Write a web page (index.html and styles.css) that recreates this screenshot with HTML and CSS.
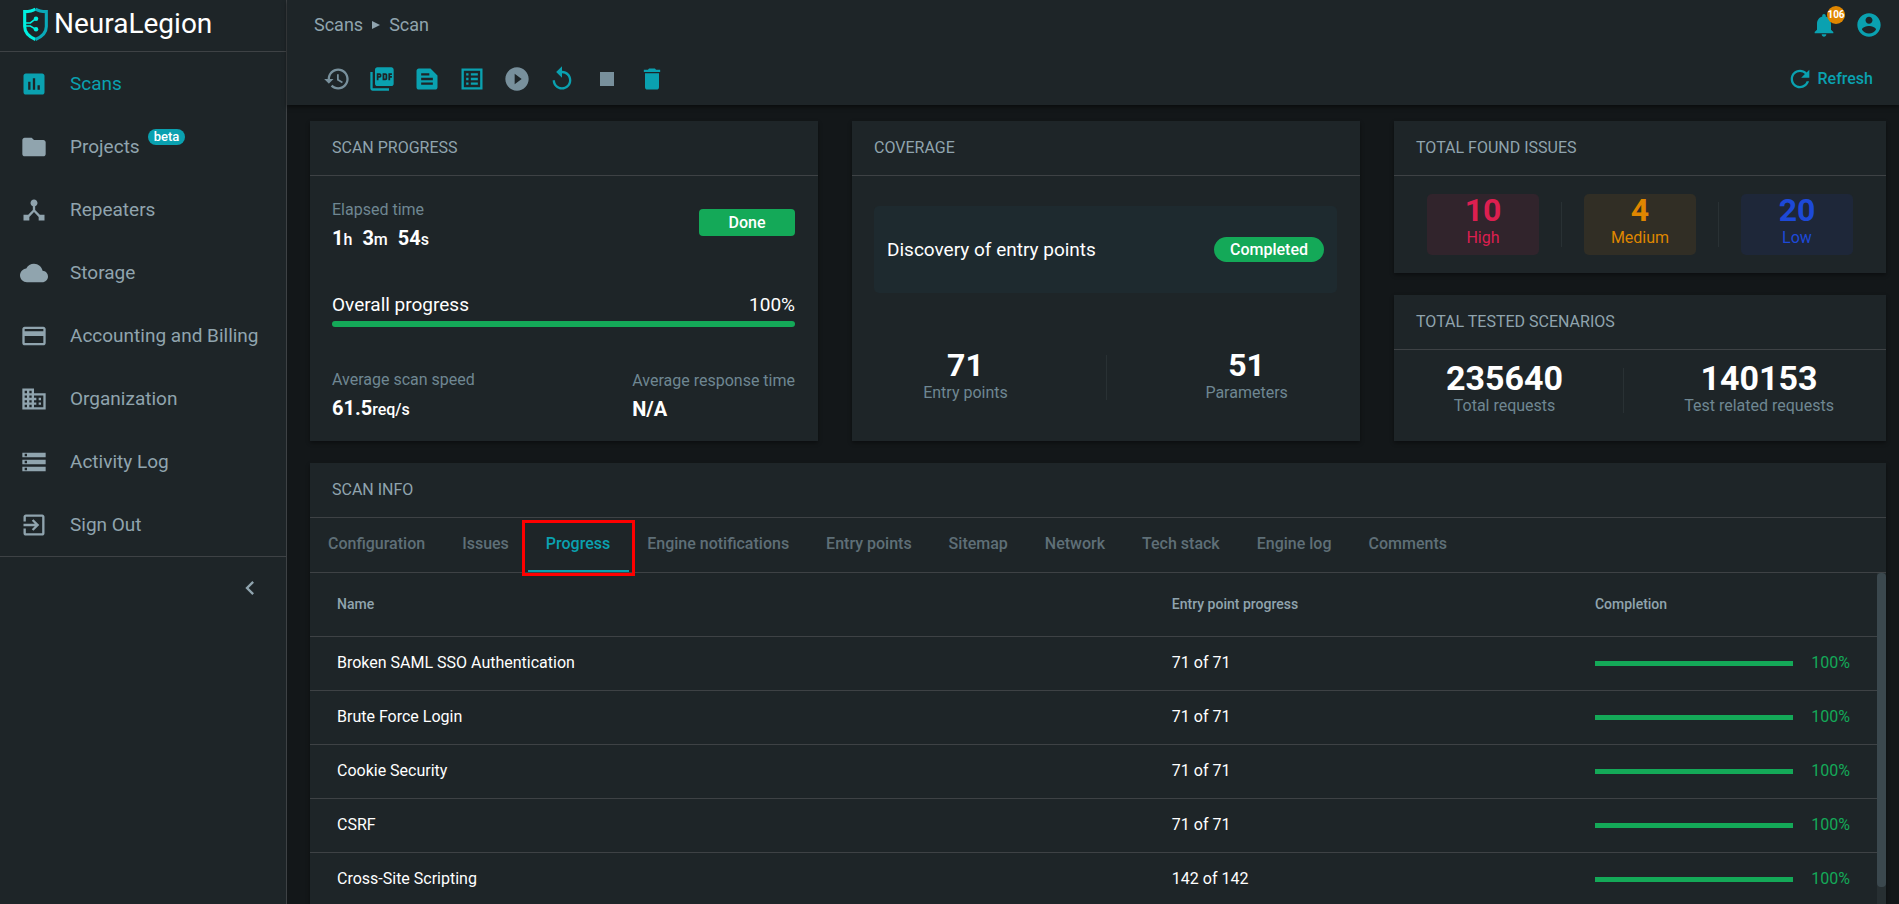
FILE: index.html
```html
<!DOCTYPE html>
<html lang="en">
<head>
    <meta charset="UTF-8">
    <meta name="viewport" content="width=device-width, initial-scale=1.0">
    <title>NeuraLegion - Scan</title>
    <link rel="stylesheet" href="styles.css">
</head>
<body>
    <aside class="sidebar">
        <a class="logo" href="#">
            <svg class="logo-mark" viewBox="0 0 24 33">
                <path d="M12 2 C9 4 5.500 4.500 1.500 4.500 V19 C1.500 25.500 7 29.500 12 31.500" fill="none" stroke="#00f0e0" stroke-width="3"/>
                <path d="M12 2 C15 4 18.500 4.500 22.500 4.500 V19 C22.500 25.500 17 29.500 12 31.500" fill="none" stroke="#0aa9b8" stroke-width="3"/>
                <path d="M2 15.500 H7 L12 11.500 M2 18.500 H7 L12 21.500" fill="none" stroke="#00f0e0" stroke-width="1.500"/>
                <circle cx="12.500" cy="11.500" r="2.200" fill="#00f0e0"/>
                <circle cx="12.500" cy="21.500" r="2.200" fill="#00f0e0"/>
            </svg>
            <span>NeuraLegion</span>
        </a>
        <nav class="menu">
            <a class="menu-item active" href="#">
                <svg class="menu-icon" viewBox="0 0 24 24"><path d="M19 3H5c-1.100 0-2 .9-2 2v14c0 1.100.9 2 2 2h14c1.100 0 2-.9 2-2V5c0-1.100-.9-2-2-2zM9 17H7v-7h2v7zm4 0h-2V7h2v10zm4 0h-2v-4h2v4z"/></svg>
                <span>Scans</span>
            </a>
            <a class="menu-item" href="#">
                <svg class="menu-icon" viewBox="0 0 24 24"><path d="M10 4H4c-1.100 0-1.990.9-1.990 2L2 18c0 1.100.9 2 2 2h16c1.100 0 2-.9 2-2V8c0-1.100-.9-2-2-2h-8l-2-2z"/></svg>
                <span>Projects</span>
                <span class="beta">beta</span>
            </a>
            <a class="menu-item" href="#">
                <svg class="menu-icon" viewBox="0 0 24 24"><path d="M17 16l-4-4V8.820C14.160 8.400 15 7.300 15 6c0-1.660-1.340-3-3-3S9 4.340 9 6c0 1.300.84 2.400 2 2.820V12l-4 4H3v5h5v-3.050l4-4.200 4 4.200V21h5v-5h-4z"/></svg>
                <span>Repeaters</span>
            </a>
            <a class="menu-item" href="#">
                <svg class="menu-icon" viewBox="0 0 24 24"><path d="M19.350 10.040C18.670 6.590 15.640 4 12 4 9.110 4 6.600 5.640 5.350 8.040 2.340 8.360 0 10.910 0 14c0 3.310 2.690 6 6 6h13c2.760 0 5-2.240 5-5 0-2.640-2.050-4.780-4.650-4.960z"/></svg>
                <span>Storage</span>
            </a>
            <a class="menu-item" href="#">
                <svg class="menu-icon" viewBox="0 0 24 24"><path d="M20 4H4c-1.110 0-1.990.89-1.990 2L2 18c0 1.110.89 2 2 2h16c1.110 0 2-.89 2-2V6c0-1.110-.89-2-2-2zm0 14H4v-6h16v6zm0-10H4V6h16v2z"/></svg>
                <span>Accounting and Billing</span>
            </a>
            <a class="menu-item" href="#">
                <svg class="menu-icon" viewBox="0 0 24 24"><path d="M12 7V3H2v18h20V7H12zM6 19H4v-2h2v2zm0-4H4v-2h2v2zm0-4H4V9h2v2zm0-4H4V5h2v2zm4 12H8v-2h2v2zm0-4H8v-2h2v2zm0-4H8V9h2v2zm0-4H8V5h2v2zm10 12h-8v-2h2v-2h-2v-2h2v-2h-2V9h8v10zm-2-8h-2v2h2v-2zm0 4h-2v2h2v-2z"/></svg>
                <span>Organization</span>
            </a>
            <a class="menu-item" href="#">
                <svg class="menu-icon" viewBox="0 0 24 24"><path d="M2 20h20v-4H2v4zm2-3h2v2H4v-2zM2 4v4h20V4H2zm4 3H4V5h2v2zm-4 7h20v-4H2v4zm2-3h2v2H4v-2z"/></svg>
                <span>Activity Log</span>
            </a>
            <a class="menu-item" href="#">
                <svg class="menu-icon" viewBox="0 0 24 24"><path d="M10.090 15.590L11.500 17l5-5-5-5-1.410 1.410L12.670 11H3v2h9.670l-2.580 2.590zM19 3H5c-1.110 0-2 .9-2 2v4h2V5h14v14H5v-4H3v4c0 1.100.89 2 2 2h14c1.100 0 2-.9 2-2V5c0-1.100-.9-2-2-2z"/></svg>
                <span>Sign Out</span>
            </a>
        </nav>
        <button class="collapse" aria-label="Collapse menu">
            <svg viewBox="0 0 24 24"><path d="M15.410 7.410L14 6l-6 6 6 6 1.410-1.410L10.830 12z"/></svg>
        </button>
    </aside>

    <div class="page">
        <header class="topbar">
            <div class="topbar-row">
                <div class="breadcrumbs">
                    <a href="#">Scans</a>
                    <svg viewBox="0 0 8 8"><path d="M0 0l8 4-8 4z"/></svg>
                    <span>Scan</span>
                </div>
                <div class="account">
                    <button class="icon-button bell" aria-label="Notifications">
                        <svg viewBox="0 0 24 24"><path d="M12 22c1.100 0 2-.9 2-2h-4c0 1.100.89 2 2 2zm6-6v-5c0-3.070-1.640-5.640-4.500-6.320V4c0-.83-.67-1.500-1.500-1.500s-1.500.67-1.500 1.500v.68C7.630 5.360 6 7.920 6 11v5l-2 2v1h16v-1l-2-2z"/></svg>
                        <span class="bell-count">106</span>
                    </button>
                    <button class="icon-button" aria-label="Account">
                        <svg viewBox="0 0 24 24"><path d="M12 2C6.480 2 2 6.480 2 12s4.480 10 10 10 10-4.480 10-10S17.520 2 12 2zm0 3c1.660 0 3 1.340 3 3s-1.340 3-3 3-3-1.340-3-3 1.340-3 3-3zm0 14.200c-2.500 0-4.710-1.280-6-3.220.03-1.990 4-3.080 6-3.080 1.990 0 5.970 1.090 6 3.080-1.290 1.940-3.500 3.220-6 3.220z"/></svg>
                    </button>
                </div>
            </div>
            <div class="topbar-row">
                <div class="toolbar">
                    <button class="icon-button muted" aria-label="History">
                        <svg viewBox="0 0 24 24"><path d="M13 3c-4.970 0-9 4.030-9 9H1l3.890 3.890.07.14L9 12H6c0-3.870 3.130-7 7-7s7 3.130 7 7-3.130 7-7 7c-1.930 0-3.680-.79-4.940-2.060l-1.420 1.420C8.270 19.990 10.510 21 13 21c4.970 0 9-4.030 9-9s-4.030-9-9-9zm-1 5v5l4.280 2.540.72-1.210-3.500-2.080V8H12z"/></svg>
                    </button>
                    <button class="icon-button" aria-label="Export PDF">
                        <svg viewBox="0 0 24 24"><path d="M20 2H8c-1.100 0-2 .9-2 2v12c0 1.100.9 2 2 2h12c1.100 0 2-.9 2-2V4c0-1.100-.9-2-2-2zm-8.500 7.500c0 .83-.67 1.500-1.500 1.500H9v2H7.500V7H10c.83 0 1.500.67 1.500 1.500v1zm5 2c0 .83-.67 1.500-1.500 1.500h-2.500V7H15c.83 0 1.500.67 1.500 1.500v3zm4-3H19v1h1.500V11H19v2h-1.500V7h3v1.500zM9 9.500h1v-1H9v1zM4 6H2v14c0 1.100.9 2 2 2h14v-2H4V6zm10 5.500h1v-3h-1v3z"/></svg>
                    </button>
                    <button class="icon-button" aria-label="Report">
                        <svg viewBox="0 0 24 24"><path d="M15 3H5c-1.100 0-1.990.9-1.990 2L3 19c0 1.100.89 2 1.990 2H19c1.100 0 2-.9 2-2V9l-6-6zM7 7h7v2H7V7zm10 10H7v-2h10v2zm0-4H7v-2h10v2z"/></svg>
                    </button>
                    <button class="icon-button" aria-label="Details">
                        <svg viewBox="0 0 24 24"><path d="M19 5v14H5V5h14m2-2H3v18h18V3zM11 7h6v2h-6V7zm0 4h6v2h-6v-2zm0 4h6v2h-6v-2zM7 7h2v2H7V7zm0 4h2v2H7v-2zm0 4h2v2H7v-2z"/></svg>
                    </button>
                    <button class="icon-button muted" aria-label="Resume">
                        <svg viewBox="0 0 24 24"><path d="M12 2C6.480 2 2 6.480 2 12s4.480 10 10 10 10-4.480 10-10S17.520 2 12 2zm-2 14.500v-9l6 4.500-6 4.500z"/></svg>
                    </button>
                    <button class="icon-button" aria-label="Restart">
                        <svg viewBox="0 0 24 24"><path d="M12 5V1L7 6l5 5V7c3.310 0 6 2.690 6 6s-2.690 6-6 6-6-2.690-6-6H4c0 4.420 3.580 8 8 8s8-3.580 8-8-3.580-8-8-8z"/></svg>
                    </button>
                    <button class="icon-button muted" aria-label="Stop">
                        <svg viewBox="0 0 24 24"><path d="M6 6h12v12H6z"/></svg>
                    </button>
                    <button class="icon-button" aria-label="Delete">
                        <svg viewBox="0 0 24 24"><path d="M6 19c0 1.100.9 2 2 2h8c1.100 0 2-.9 2-2V7H6v12zM19 4h-3.500l-1-1h-5l-1 1H5v2h14V4z"/></svg>
                    </button>
                </div>
                <button class="refresh">
                    <svg viewBox="0 0 24 24"><path d="M17.650 6.350C16.200 4.900 14.210 4 12 4c-4.420 0-7.990 3.580-7.990 8s3.570 8 7.990 8c3.730 0 6.840-2.550 7.730-6h-2.080c-.82 2.330-3.040 4-5.650 4-3.310 0-6-2.690-6-6s2.690-6 6-6c1.660 0 3.140.69 4.220 1.780L13 11h7V4l-2.350 2.350z"/></svg>
                    Refresh
                </button>
            </div>
        </header>

        <main class="content">
            <section class="summary">
                <article class="card">
                    <h2 class="card-title">SCAN PROGRESS</h2>
                    <div class="card-body">
                        <div class="between">
                            <div class="metric">
                                <span class="label">Elapsed time</span>
                                <strong class="time"><span>1<small>h</small></span><span>3<small>m</small></span><span>54<small>s</small></span></strong>
                            </div>
                            <span class="status-done">Done</span>
                        </div>
                        <div>
                            <div class="between overall">
                                <span>Overall progress</span>
                                <span>100%</span>
                            </div>
                            <div class="bar rounded"><div class="bar-fill" style="width: 100%"></div></div>
                        </div>
                        <div class="between">
                            <div class="metric">
                                <span class="label">Average scan speed</span>
                                <strong>61.5<small>req/s</small></strong>
                            </div>
                            <div class="metric">
                                <span class="label">Average response time</span>
                                <strong>N/A</strong>
                            </div>
                        </div>
                    </div>
                </article>

                <article class="card">
                    <h2 class="card-title">COVERAGE</h2>
                    <div class="card-body coverage">
                        <div class="discovery">
                            <span>Discovery of entry points</span>
                            <span class="status-pill">Completed</span>
                        </div>
                        <div class="counters">
                            <div class="counter"><strong>71</strong><span class="label">Entry points</span></div>
                            <div class="divider"></div>
                            <div class="counter"><strong>51</strong><span class="label">Parameters</span></div>
                        </div>
                    </div>
                </article>

                <div class="totals">
                    <article class="card">
                        <h2 class="card-title">TOTAL FOUND ISSUES</h2>
                        <div class="issues">
                            <div class="issue high"><strong>10</strong><span>High</span></div>
                            <div class="divider"></div>
                            <div class="issue medium"><strong>4</strong><span>Medium</span></div>
                            <div class="divider"></div>
                            <div class="issue low"><strong>20</strong><span>Low</span></div>
                        </div>
                    </article>
                    <article class="card scenarios">
                        <h2 class="card-title">TOTAL TESTED SCENARIOS</h2>
                        <div class="counters">
                            <div class="counter"><strong>235640</strong><span class="label">Total requests</span></div>
                            <div class="divider"></div>
                            <div class="counter"><strong>140153</strong><span class="label">Test related requests</span></div>
                        </div>
                    </article>
                </div>
            </section>

            <section class="card scan-info">
                <h2 class="card-title">SCAN INFO</h2>
                <div class="tabs" role="tablist">
                    <button class="tab" role="tab">Configuration</button>
                    <button class="tab" role="tab">Issues</button>
                    <button class="tab active" role="tab" aria-selected="true">Progress</button>
                    <button class="tab" role="tab">Engine notifications</button>
                    <button class="tab" role="tab">Entry points</button>
                    <button class="tab" role="tab">Sitemap</button>
                    <button class="tab" role="tab">Network</button>
                    <button class="tab" role="tab">Tech stack</button>
                    <button class="tab" role="tab">Engine log</button>
                    <button class="tab" role="tab">Comments</button>
                </div>
                <div class="table-wrap">
                    <table class="tests">
                        <thead>
                            <tr><th class="col-name">Name</th><th class="col-points">Entry point progress</th><th>Completion</th></tr>
                        </thead>
                        <tbody>
                            <tr>
                                <td>Broken SAML SSO Authentication</td>
                                <td>71 of 71</td>
                                <td><div class="completion"><div class="bar"><div class="bar-fill" style="width: 100%"></div></div><span>100%</span></div></td>
                            </tr>
                            <tr>
                                <td>Brute Force Login</td>
                                <td>71 of 71</td>
                                <td><div class="completion"><div class="bar"><div class="bar-fill" style="width: 100%"></div></div><span>100%</span></div></td>
                            </tr>
                            <tr>
                                <td>Cookie Security</td>
                                <td>71 of 71</td>
                                <td><div class="completion"><div class="bar"><div class="bar-fill" style="width: 100%"></div></div><span>100%</span></div></td>
                            </tr>
                            <tr>
                                <td>CSRF</td>
                                <td>71 of 71</td>
                                <td><div class="completion"><div class="bar"><div class="bar-fill" style="width: 100%"></div></div><span>100%</span></div></td>
                            </tr>
                            <tr>
                                <td>Cross-Site Scripting</td>
                                <td>142 of 142</td>
                                <td><div class="completion"><div class="bar"><div class="bar-fill" style="width: 100%"></div></div><span>100%</span></div></td>
                            </tr>
                        </tbody>
                    </table>
                    <div class="scroll-track"><div class="scroll-thumb"></div></div>
                </div>
            </section>
        </main>
    </div>
</body>
</html>
```

FILE: styles.css
```css
* {
    margin: 0;
    padding: 0;
    box-sizing: border-box;
}

body {
    display: flex;
    height: 100vh;
    overflow: hidden;
    background: #131719;
    color: #fff;
    font-family: Roboto, "Liberation Sans", sans-serif;
    font-size: 16px;
    line-height: 24px;
}

a {
    color: inherit;
    text-decoration: none;
}

button {
    background: none;
    border: none;
    color: inherit;
    font: inherit;
    cursor: pointer;
}

svg {
    display: block;
    fill: currentColor;
}

/* sidebar */
.sidebar {
    flex: none;
    width: 287px;
    background: #1e2528;
    border-right: 1px solid #3e4245;
    color: #90a4ae;
}

.logo {
    display: flex;
    align-items: center;
    gap: 6px;
    height: 52px;
    padding: 0 23px 4px;
    border-bottom: 1px solid #3e4245;
    color: #fff;
    font-size: 28px;
}

.logo-mark {
    width: 25px;
    height: 34px;
}

.menu {
    border-bottom: 1px solid #3e4245;
}

.menu-item {
    display: flex;
    align-items: center;
    height: 63px;
    padding-left: 20px;
    font-size: 19px;
}

.menu-item.active {
    color: #0aa1b0;
}

.menu-icon {
    width: 28px;
    height: 28px;
    margin-right: 22px;
}

.beta {
    align-self: flex-start;
    margin: 14px 0 0 8px;
    padding: 0 6px;
    border-radius: 8px;
    background: #0aa1b0;
    color: #fff;
    font-size: 13px;
    font-weight: 500;
    line-height: 16px;
}

.collapse {
    display: block;
    margin: 17px 22px 0 auto;
}

.collapse svg {
    width: 28px;
    height: 28px;
}

/* header */
.page {
    flex: 1;
    display: flex;
    flex-direction: column;
    min-width: 0;
}

.topbar {
    display: flex;
    flex-direction: column;
    gap: 4px;
    height: 105px;
    padding: 0 16px 0 27px;
    background: #1e2528;
    box-shadow: 0 2px 4px rgba(0, 0, 0, 0.5);
}

.topbar-row {
    display: flex;
    align-items: center;
    justify-content: space-between;
    height: 50px;
}

.breadcrumbs {
    display: flex;
    align-items: center;
    gap: 9px;
    color: #90a4ae;
    font-size: 18px;
}

.breadcrumbs svg {
    width: 8px;
    height: 8px;
}

.account,
.toolbar {
    display: flex;
    gap: 17px;
}

.toolbar {
    padding-left: 9px;
}

.icon-button {
    color: #0aa1b0;
}

.icon-button.muted {
    color: #78909c;
}

.icon-button svg {
    width: 28px;
    height: 28px;
}

.bell {
    position: relative;
}

.bell-count {
    position: absolute;
    top: -5px;
    left: 17px;
    width: 18px;
    height: 18px;
    border-radius: 50%;
    background: #df8600;
    color: #fff;
    font-size: 10px;
    font-weight: 700;
    line-height: 18px;
}

.refresh {
    display: flex;
    align-items: center;
    gap: 4px;
    padding-right: 10px;
    color: #0aa1b0;
    font-weight: 500;
}

.refresh svg {
    width: 28px;
    height: 28px;
}

/* cards */
.content {
    flex: 1;
    min-height: 0;
    display: flex;
    flex-direction: column;
    gap: 22px;
    padding: 16px 13px 0 23px;
}

.card {
    background: #1e2528;
    box-shadow: 0 2px 4px rgba(0, 0, 0, 0.4);
}

.card-title {
    height: 55px;
    padding: 0 22px;
    border-bottom: 1px solid #3e4245;
    color: #90a4ae;
    font-size: 16px;
    font-weight: 400;
    line-height: 54px;
}

.summary {
    display: grid;
    grid-template-columns: 508fr 508fr 492fr;
    gap: 34px;
}

.card-body {
    display: flex;
    flex-direction: column;
    gap: 41px;
    padding: 22px 23px 19px 22px;
}

.between {
    display: flex;
    align-items: center;
    justify-content: space-between;
}

.label {
    color: #6f8792;
}

.metric {
    display: flex;
    flex-direction: column;
    gap: 4px;
}

.metric strong {
    font-size: 20px;
}

.metric small {
    font-size: 16px;
    font-weight: 500;
}

.time {
    display: flex;
    gap: 10px;
}

.status-done {
    width: 96px;
    margin-bottom: 6px;
    border-radius: 4px;
    background: #14a958;
    font-weight: 500;
    line-height: 27px;
    text-align: center;
}

.overall {
    margin-bottom: 4px;
    font-size: 19px;
}

.bar {
    flex: 1;
    height: 5px;
    background: #2b3438;
}

.bar-fill {
    height: 100%;
    background: #14a958;
}

.bar.rounded {
    height: 6px;
    border-radius: 3px;
    overflow: hidden;
}

.coverage {
    gap: 56px;
    padding: 30px 23px 30px 22px;
}

.discovery {
    display: flex;
    align-items: center;
    justify-content: space-between;
    height: 87px;
    padding: 0 13px;
    border-radius: 5px;
    background: #1e2a2f;
    font-size: 19px;
}

.status-pill {
    padding: 0 16px;
    border-radius: 13px;
    background: #14a958;
    font-size: 16px;
    font-weight: 500;
    line-height: 25px;
}

.counters {
    display: flex;
    align-items: center;
    justify-content: space-around;
}

.counter {
    display: flex;
    flex-direction: column;
    align-items: center;
}

.counter strong,
.issue strong {
    font-size: 32px;
    line-height: 32px;
}

.divider {
    width: 1px;
    height: 45px;
    background: #293134;
}

.totals {
    display: flex;
    flex-direction: column;
    gap: 22px;
}

.issues {
    display: flex;
    align-items: center;
    justify-content: center;
    gap: 22px;
    padding: 18px 22px;
}

.issue {
    display: flex;
    flex-direction: column;
    align-items: center;
    width: 112px;
    height: 61px;
    border-radius: 5px;
}

.issue.high {
    background: #31242c;
    color: #dc1f50;
}

.issue.medium {
    background: #312e25;
    color: #df8600;
}

.issue.low {
    background: #1e2739;
    color: #1d49d8;
}

.scenarios {
    flex: 1;
}

.scenarios .counters {
    padding: 12px 22px;
}

.scenarios strong {
    font-size: 34px;
}

/* scan info */
.scan-info {
    flex: 1;
    min-height: 0;
    display: flex;
    flex-direction: column;
}

.scan-info .card-title {
    flex: none;
}

.tabs {
    flex: none;
    display: flex;
    height: 55px;
    border-bottom: 1px solid #3e4245;
}

.tab {
    position: relative;
    padding: 0 19px 0 18px;
    border-bottom: 2px solid transparent;
    color: #5f6f77;
    font-weight: 500;
}

.tab.active {
    border-color: #0aa1b0;
    color: #0aa1b0;
}

.tab.active::after {
    content: "";
    position: absolute;
    inset: 2px -6px -6px;
    border: 3px solid #f00;
}

.table-wrap {
    flex: 1;
    min-height: 0;
    display: flex;
    overflow: hidden;
}

.tests {
    flex: 1;
    align-self: flex-start;
    border-collapse: collapse;
    table-layout: fixed;
}

.tests th,
.tests td {
    height: 54px;
    padding: 0 27px;
    border-bottom: 1px solid #3e4245;
    text-align: left;
}

.tests th {
    height: 63px;
    color: #90a4ae;
    font-size: 14px;
    font-weight: 500;
}

.tests th + th,
.tests td + td {
    padding-left: 0;
}

.col-name {
    width: 55%;
}

.col-points {
    width: 27%;
}

.completion {
    display: flex;
    align-items: center;
    gap: 18px;
    color: #14a958;
}

.scroll-track {
    width: 9px;
    background: #272f32;
}

.scroll-thumb {
    height: 95%;
    border-radius: 4px;
    background: #3b484e;
}
```
